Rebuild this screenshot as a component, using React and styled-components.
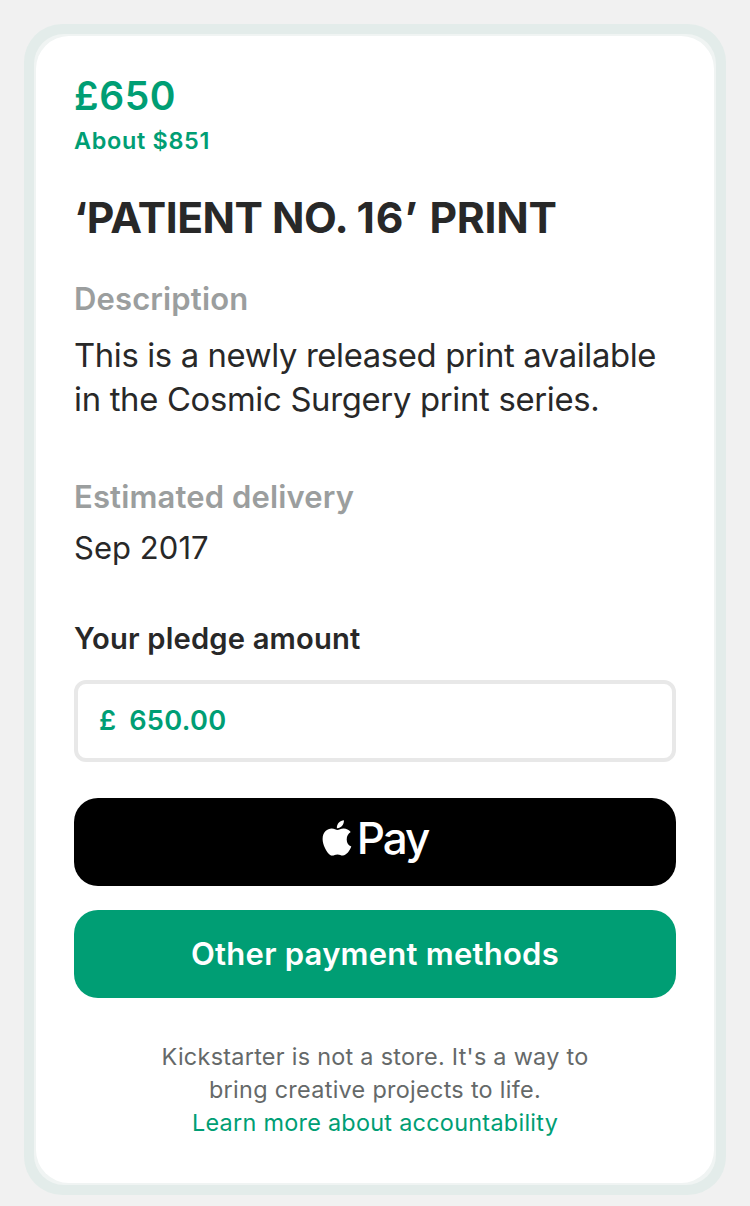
import React from 'react';
import styled, { createGlobalStyle } from 'styled-components';

const Global = createGlobalStyle`
  * { box-sizing: border-box; }
  body { margin: 0; background: #f1f1f1; font-family: Inter, "Liberation Sans", sans-serif; color: #282828; }
`;
const Page = styled.main`
  min-height: 1206px;
  padding: 24px 24px 11px;
  background: #f1f1f1;
`;
const Frame = styled.div`
  height: 1171px;
  padding: 10px;
  border-radius: 38px;
  background: #e3ecea;
`;
const Edge = styled.div`
  height: 100%;
  padding: 2px;
  border-radius: 30px;
  background: #f0f4f3;
`;
const Card = styled.section`
  height: 100%;
  padding: 38px 38px 0;
  border-radius: 33px;
  background: #fff;
`;
const Line = styled.div`
  width: max-content;
  margin: ${(p) => p.$top || 0}px 0 0;
  white-space: nowrap;
  font-size: ${(p) => p.$size}px;
  line-height: ${(p) => p.$lh}px;
  font-weight: ${(p) => p.$weight || 400};
  letter-spacing: ${(p) => p.$ls || 0}px;
  color: ${(p) => p.$color || 'inherit'};
`;
const Tracking = styled.span`
  letter-spacing: ${(p) => p.$ls}px;
`;
const Price = styled(Line)`color: #009e74;`;
const Label = styled(Line)`color: #9b9e9e;`;
const Field = styled.div`
  display: flex;
  align-items: center;
  gap: 13px;
  height: 82px;
  margin-top: 22px;
  padding: 0 21px;
  border: 4px solid #e8e8e8;
  border-radius: 12px;
`;
const Button = styled.button`
  display: flex;
  align-items: center;
  justify-content: center;
  width: 100%;
  height: 88px;
  margin-top: ${(p) => p.$top}px;
  padding: 0;
  border: 0;
  border-radius: 24px;
  background: ${(p) => p.$bg};
  color: #fff;
  font-family: inherit;
`;
const Apple = styled.svg`
  width: 30px;
  height: 36px;
  margin: 0 5px 9px 0;
  fill: #fff;
`;
const PayWord = styled(Line)`
  padding-bottom: 8px;
`;
const Footer = styled.footer`
  display: flex;
  flex-direction: column;
  align-items: center;
  margin-top: 42px;
  color: #656969;
`;
const Link = styled(Line)`
  color: #009e74;
  text-decoration: none;
`;

export default function App() {
  return (
    <>
      <Global />
      <Page><Frame><Edge><Card>
        <Price $size={39} $lh={44} $weight={600} $ls={0.6}>£650</Price>
        <Price $size={23.4} $lh={30} $weight={600} $top={8} $ls={0.7}>About $851</Price>
        <Line as="h1" $size={42.6} $lh={52} $weight={700} $top={36} $ls={-0.2}>
          <Tracking $ls={-0.5}>‘PATIENT NO. </Tracking>
          <Tracking $ls={0.9}>16’ </Tracking>
          PRINT
        </Line>
        <Label $size={31} $lh={40} $weight={600} $top={35} $ls={0.14}>Description</Label>
        <Line $size={32.8} $lh={44} $top={14} $ls={-0.36}>This is a newly released print available</Line>
        <Line $size={32.8} $lh={44} $ls={-0.3}>in the Cosmic Surgery print series.</Line>
        <Label $size={31} $lh={40} $weight={600} $top={56} $ls={0.14}>Estimated delivery</Label>
        <Line $size={31} $lh={40} $top={11} $ls={0.05}>Sep 2017</Line>
        <Line $size={29.2} $lh={38} $weight={600} $top={52} $ls={0.16}>Your pledge amount</Line>
        <Field>
          <Price $size={27.2} $lh={36} $weight={600}>£</Price>
          <Price $size={27.2} $lh={36} $weight={600} $ls={0.3}>650.00</Price>
        </Field>
        <Button $top={36} $bg="#000" aria-label="Apple Pay">
          <Apple viewBox="0 0 30 36" aria-hidden="true">
            <path d="M21.9 0.2C22.1 2.3 21.3 4.3 20.1 5.8C18.8 7.3 16.8 8.4 14.9 8.2C14.6 6.2 15.6 4.1 16.7 2.8C18 1.3 20.2 0.2 21.9 0.2Z" />
            <path d="M21.8 8.4C19 8.3 16.9 10 15.5 10C14.1 10 12.2 8.5 9.6 8.5C5.6 8.6 0.6 11.6 0.6 19C0.6 25 4.5 31.5 7 34C8.2 35.2 9.3 35.8 10.6 35.6C12.2 35.4 13 34.4 15.5 34.4C18 34.4 18.6 35.6 20.8 35.6C24.6 35.5 27.9 30.4 29.3 26.6C26.5 25.3 24.7 23 24.7 19.4C24.7 16.3 26.4 13.5 28.7 12.1C27 9.5 24.2 8.5 21.8 8.4Z" />
          </Apple>
          <PayWord $size={44} $lh={52} $weight={450} $ls={-2.1}>Pay</PayWord>
        </Button>
        <Button $top={24} $bg="#009e74"><Line $size={31} $lh={40} $weight={600} $ls={0.24}>Other payment methods</Line></Button>
        <Footer>
          <Line $size={23.4} $lh={33} $ls={0.28}>Kickstarter is not a store. It's a way to</Line>
          <Line $size={23.4} $lh={33} $ls={0.3}>bring creative projects to life.</Line>
          <Link as="a" href="#accountability" $size={23.4} $lh={33} $ls={0.28}>Learn more about accountability</Link>
        </Footer>
      </Card></Edge></Frame></Page>
    </>
  );
}
